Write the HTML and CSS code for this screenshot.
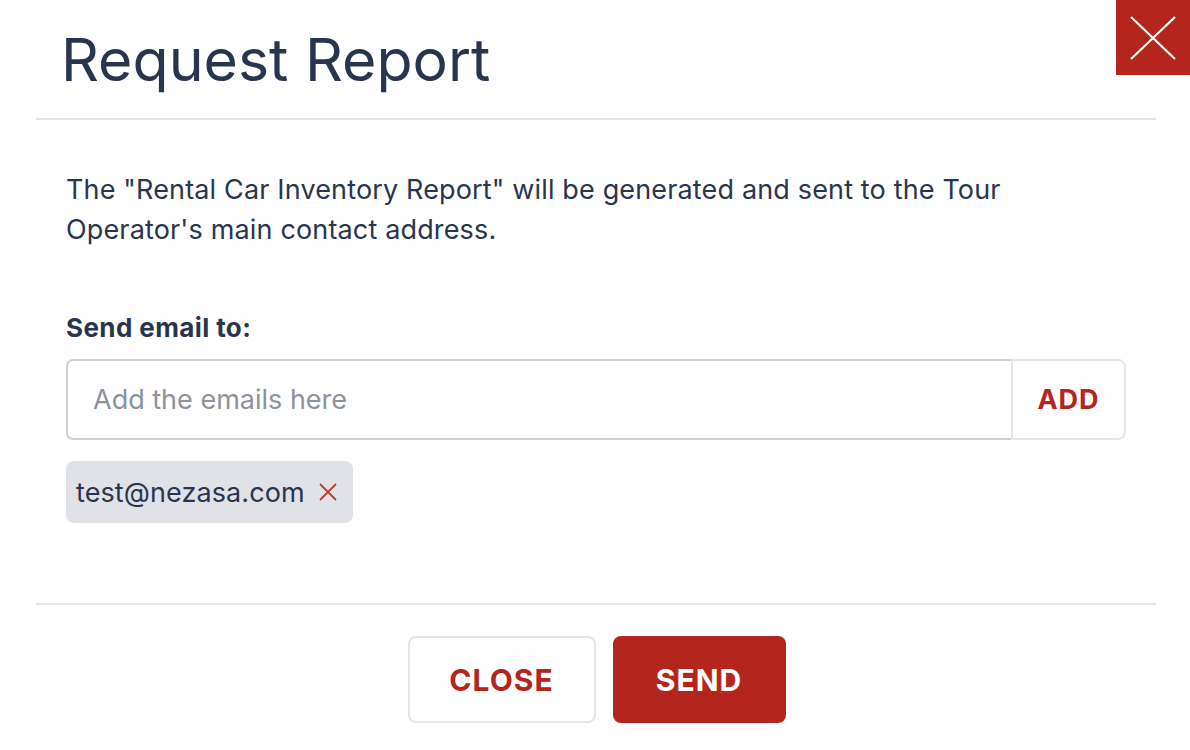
FILE: index.html
```html
<html>
    <head>
        <link rel="stylesheet" href="styles.css">
    </head>
    <body>
        <div class="modal">
          <button class="x-close" aria-label="Close">
            <svg width="48" height="44" viewBox="0 0 48 44"><path d="M2 1 L46 43 M46 1 L2 43" stroke="#fff" stroke-width="2.2" fill="none"/></svg>
          </button>
          <div class="head">
            <h1>Request Report</h1>
          </div>
          <div class="body">
            <p>The "Rental Car Inventory Report" will be generated and sent to the Tour Operator's main contact address.</p>
            <label for="emails">Send email to:</label>
            <div class="email-row">
              <input id="emails" type="text" placeholder="Add the emails here">
              <button class="add">ADD</button>
            </div>
            <div class="chips">
              <span class="chip">test@nezasa.com
                <svg width="18" height="18" viewBox="0 0 18 18"><path d="M1 1 L17 17 M17 1 L1 17" stroke="#c0392b" stroke-width="1.8" fill="none"/></svg>
              </span>
            </div>
          </div>
          <div class="foot">
            <button class="btn outline">CLOSE</button>
            <button class="btn solid">SEND</button>
          </div>
        </div>
    </body>
</html>
```

FILE: styles.css
```css
html, body {padding: 0; margin: 0; background: #fff}
body {
  font-family: "Inter", "Lato", sans-serif;
  color: #29354f;
}
.modal {
  position: relative;
  width: 1190px;
  height: 750px;
  padding: 0 34px 0 36px;
  box-sizing: border-box;
}
.x-close {
  position: absolute;
  top: 0;
  right: 0;
  width: 74px;
  height: 75px;
  background: #b3251d;
  border: 0;
  padding: 0;
  display: flex;
  align-items: center;
  justify-content: center;
}
.head {
  height: 120px;
  border-bottom: 2px solid #e6e6e6;
  padding-left: 25px;
  box-sizing: border-box;
}
h1 {
  margin: 0;
  padding-top: 24px;
  font-size: 59px;
  font-weight: 400;
  line-height: 72px;
  letter-spacing: 0px;
}
.body {
  padding: 50px 30px 0 30px;
  height: 485px;
  box-sizing: border-box;
  border-bottom: 2px solid #e6e6e6;
}
p {
  margin: 0;
  font-size: 27px;
  line-height: 40px;
  letter-spacing: 0.15px;
  padding-right: 80px;
}
label {
  display: block;
  margin-top: 62px;
  font-size: 26px;
  font-weight: 700;
  line-height: 32px;
  letter-spacing: 0.4px;
}
.email-row {
  display: flex;
  margin-top: 15px;
  height: 81px;
}
.email-row input {
  flex: 1;
  border: 2px solid #cfcfcf;
  border-right: 0;
  border-radius: 7px 0 0 7px;
  padding: 0 25px;
  font-family: inherit;
  font-size: 27px;
  color: #29354f;
  outline: none;
}
.email-row input::placeholder {
  color: #8e929b;
}
.add {
  width: 115px;
  border: 2px solid #e6e6e6;
  border-radius: 0 8px 8px 0;
  background: #fff;
  color: #b3251d;
  font-family: inherit;
  font-weight: 700;
  font-size: 27px;
  letter-spacing: 1px;
}
.chips {
  margin-top: 21px;
  display: flex;
}
.chip {
  display: inline-flex;
  align-items: center;
  gap: 14px;
  height: 62px;
  padding: 0 16px 0 10px;
  background: #e1e2e7;
  border-radius: 8px;
  font-size: 27px;
  letter-spacing: 0.1px;
}
.foot {
  display: flex;
  justify-content: center;
  gap: 17px;
  padding-top: 31px;
  padding-left: 1px;
}
.btn {
  height: 87px;
  border-radius: 8px;
  font-family: inherit;
  font-weight: 700;
  font-size: 30px;
  letter-spacing: 1px;
}
.btn.outline {
  width: 188px;
  background: #fff;
  border: 2px solid #e6e6e6;
  color: #b3251d;
}
.btn.solid {
  width: 173px;
  background: #b3251d;
  border: 0;
  color: #fff;
}
```
